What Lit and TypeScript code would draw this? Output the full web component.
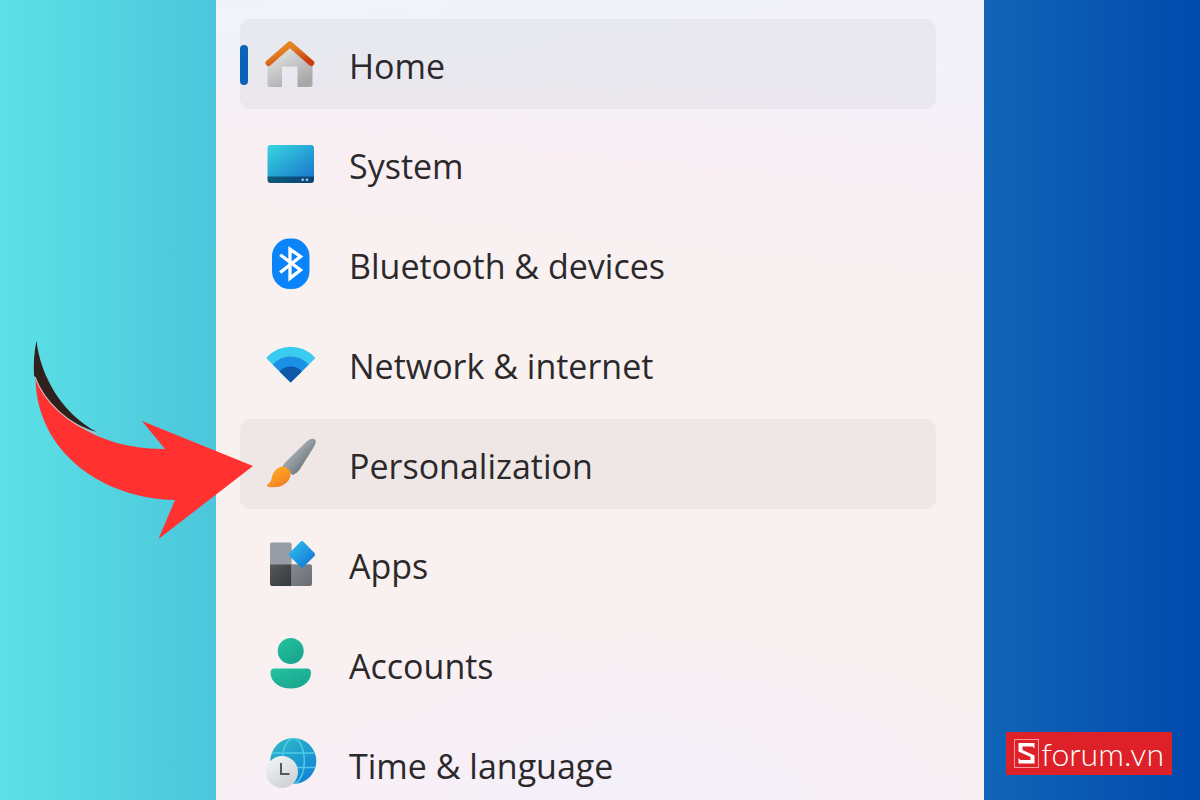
import { LitElement, html, svg, css, nothing } from "lit";
import { customElement, property } from "lit/decorators.js";

const icons: Record<string, unknown> = {
  home: svg`
    <defs>
      <linearGradient id="wall" x1="0" y1="0" x2="0.600" y2="1"><stop offset="0.2" stop-color="#e4e4e5"/><stop offset="1" stop-color="#a9a8a9"/></linearGradient>
      <linearGradient id="roof" x1="0" y1="0" x2="0.8" y2="1"><stop offset="0" stop-color="#e8982a"/><stop offset="0.45" stop-color="#df7a20"/><stop offset="1" stop-color="#c93d10"/></linearGradient>
    </defs>
    <path d="M3.500 25 26 6 48.500 25V46.500Q48.500 49 46 49H33.500V28.500H18V49H6Q3.500 49 3.500 46.500Z" fill="url(#wall)"/>
    <path d="M4.500 25 25.900 6.200 47.300 25" fill="none" stroke="url(#roof)" stroke-width="6" stroke-linecap="round" stroke-linejoin="round"/>`,
  system: svg`
    <defs><linearGradient id="screen" x1="0" y1="0" x2="1" y2="1"><stop offset="0" stop-color="#38d6df"/><stop offset="1" stop-color="#1878cc"/></linearGradient>
    <linearGradient id="bar" x1="0" y1="0" x2="1" y2="0"><stop offset="0" stop-color="#0c5b78"/><stop offset="1" stop-color="#0b4478"/></linearGradient></defs>
    <path d="M3.500 39V10Q3.500 7 6.500 7H47Q50 7 50 10V39Z" fill="url(#screen)"/>
    <path d="M3.500 38.500H50V41.500Q50 45 47 45H6.500Q3.500 45 3.500 41.500Z" fill="url(#bar)"/>
    <circle cx="38.700" cy="41.800" r="1.300" fill="#a9c4dc"/><circle cx="43" cy="41.800" r="1.300" fill="#a9c4dc"/>`,
  bluetooth: svg`
    <rect x="8" y="0.500" width="37.500" height="50.500" rx="17.500" ry="18" fill="#0a84f8"/>
    <path d="M16.200 16.800 36.500 32 26 40.300V11.200L36.500 18.500 16.200 34.500" fill="none" stroke="#fff" stroke-width="3.300" stroke-linejoin="miter"/>`,
  network: svg`
    <path d="M26.700 44.500 2.500 20.500Q2.200 19.500 3 19Q13 8.700 26.700 8.700T50.500 19Q51.200 19.500 51 20.500Z" fill="#3ccbf0"/>
    <path d="M26.700 44.500 8.700 26.600Q16.200 18.600 26.700 18.600T44.700 26.600Z" fill="#1c90e4"/>
    <path d="M26.700 44.500 15.500 33.400Q20 28.600 26.700 28.600T37.900 33.400Z" fill="#0d58a8"/>`,
  brush: svg`
    <defs><linearGradient id="handle" x1="0.300" y1="0.300" x2="0.700" y2="0.700"><stop offset="0" stop-color="#a9b1b9"/><stop offset="1" stop-color="#737b83"/></linearGradient>
    <linearGradient id="hair" x1="0.200" y1="0.200" x2="0.700" y2="1"><stop offset="0" stop-color="#ffa426"/><stop offset="0.5" stop-color="#fb9322"/><stop offset="1" stop-color="#ec7a2c"/></linearGradient></defs>
    <path d="M43 3.200Q48 -0.500 51 1.500Q53 4 49.500 9.500L36 31Q33 35.500 28.500 37L18.500 29Q18.500 27.500 21 24.500Z" fill="url(#handle)"/>
    <path d="M17.500 28.500Q21 28 24.500 31Q27 33.500 26.500 37Q26 42 21.500 45.500Q15 50.500 5 49Q2 48.500 3.500 46.500Q7.500 44 8 38.500Q10.500 30.500 17.500 28.500Z" fill="url(#hair)"/>`,
  apps: svg`
    <defs><linearGradient id="tile" x1="0" y1="0" x2="1" y2="1"><stop offset="0" stop-color="#2fc3f0"/><stop offset="1" stop-color="#1070d0"/></linearGradient>
    <linearGradient id="dark" x1="0" y1="0" x2="1" y2="1"><stop offset="0" stop-color="#56595c"/><stop offset="1" stop-color="#34393d"/></linearGradient>
    <linearGradient id="mid" x1="0" y1="0" x2="1" y2="1"><stop offset="0" stop-color="#858a90"/><stop offset="1" stop-color="#666c72"/></linearGradient></defs>
    <path d="M6 26.300V6.500Q6 4.500 8 4.500H25.700Q27.700 4.500 27.700 6.500V26.300Z" fill="#969da5"/>
    <path d="M6 26.300H27.700V48H8Q6 48 6 46Z" fill="url(#dark)"/>
    <path d="M27.700 26.300H46Q48 26.300 48 28.300V46Q48 48 46 48H27.700Z" fill="url(#mid)"/>
    <path d="M36.500 3.700Q38 2.400 39.500 3.700L50.500 15Q51.800 16.500 50.500 18L39.500 29Q38 30.400 36.500 29L25.500 18Q24.200 16.500 25.500 15Z" fill="url(#tile)"/>`,
  accounts: svg`
    <defs><linearGradient id="body" x1="0" y1="0" x2="0.700" y2="1"><stop offset="0" stop-color="#25c3a2"/><stop offset="1" stop-color="#19a48d"/></linearGradient></defs>
    <circle cx="26.700" cy="13" r="13" fill="url(#body)"/>
    <path d="M10.500 30.500H43Q47 30.500 47 34.500Q47 42 40.500 46.500Q35 50.500 26.700 50.500T13 46.500Q6.500 42 6.500 34.500Q6.500 30.500 10.500 30.500Z" fill="url(#body)"/>`,
  time: svg`
    <defs><linearGradient id="globe" x1="0.200" y1="0" x2="0.800" y2="1"><stop offset="0" stop-color="#2cb8c6"/><stop offset="1" stop-color="#1180d8"/></linearGradient>
    <linearGradient id="face" x1="0" y1="0" x2="0.600" y2="1"><stop offset="0" stop-color="#f6f7f8"/><stop offset="1" stop-color="#cfd2d6"/></linearGradient></defs>
    <circle cx="29.300" cy="23" r="23" fill="url(#globe)"/>
    <g fill="none" stroke="#4fcbe8" stroke-width="1.500"><path d="M8 15H50.500M8 29.500H51"/><ellipse cx="29.300" cy="23" rx="11" ry="22.500"/></g>
    <circle cx="18" cy="34" r="16" fill="url(#face)"/>
    <path d="M17 25V36H25.500" fill="none" stroke="#55575b" stroke-width="2"/>`,
};

interface Entry { label: string; icon: string; state?: "current" | "hover"; }

const entries: Entry[] = [
  { label: "Home", icon: "home", state: "current" },
  { label: "System", icon: "system" },
  { label: "Bluetooth & devices", icon: "bluetooth" },
  { label: "Network & internet", icon: "network" },
  { label: "Personalization", icon: "brush", state: "hover" },
  { label: "Apps", icon: "apps" },
  { label: "Accounts", icon: "accounts" },
  { label: "Time & language", icon: "time" },
];

@customElement("nav-entry")
export class NavEntry extends LitElement {
  @property({ attribute: false }) entry!: Entry;

  static styles = css`
    :host { display: block; position: relative; }
    .link {
      display: flex; align-items: center; gap: 33px;
      height: 90px; box-sizing: border-box; padding-left: 24px;
      border-radius: 10px; color: #2b292b; text-decoration: none;
      font: 34px/48px "Open Sans", "Noto Sans", sans-serif;
    }
    .label { padding-top: 4px; }
    .current, .hover { background: rgba(60, 50, 55, 0.05); }
    .icon { width: 52px; height: 52px; flex: none; overflow: visible; }
    .marker {
      position: absolute; left: 0; top: 26px; width: 8px; height: 40px;
      border-radius: 4px; background: #0a63b8;
    }
    .arrow {
      position: absolute; left: -210px; top: -83px;
      width: 228px; height: 208px; pointer-events: none;
    }
  `;

  render() {
    const { label, icon, state } = this.entry;
    return html`
      <a class="link ${state ?? ""}" href="#${icon}" aria-current=${state === "current" ? "page" : nothing}>
        <svg class="icon" viewBox="0 0 52 52" aria-hidden="true">${icons[icon]}</svg>
        <span class="label">${label}</span>
      </a>
      ${state === "current" ? html`<span class="marker"></span>` : nothing}
      ${state === "hover" ? html`
        <svg class="arrow" viewBox="30 336 228 208" aria-hidden="true">
          <path d="M36.500 340.500C40 375 62 414 97 432C66 423 43 401 34 375Q33 357 36.500 340.500Z" fill="#30211f"/>
          <path d="M35.500 379C50 412 96 450 165 449L142 421 253 466 158.500 539 175 500C104 499 37 453 35.500 379Z" fill="#ff3131"/>
          <path d="M35 377C44 402 68 424 97 434" fill="none" stroke="#c9b7b8" stroke-width="1.200"/>
        </svg>` : nothing}
    `;
  }
}

@customElement("app-root")
export class AppRoot extends LitElement {
  static styles = css`
    :host {
      display: block; position: relative; height: 100vh; overflow: hidden;
      background: linear-gradient(90deg, #5ce1e6, #004aad);
    }
    .panel {
      width: 64%; min-height: 100%; margin: 0 auto; box-sizing: border-box;
      padding: 19px 48px 0 24px;
      background:
        radial-gradient(ellipse 55% 26% at 55% 100%, #f3f0fa, rgba(246, 239, 248, 0.7) 50%, rgba(249, 240, 245, 0)),
        radial-gradient(ellipse 90% 18% at 0% 0%, #f0f4fa, rgba(243, 241, 248, 0)),
        linear-gradient(186deg, #f2f2fb, #f4f1f9 12%, #f9eff4 22%, #f9f0f1 34%, #f9f1ef 42%, #f9f1ef 74%, #f9eff2 88%, #f8f0f5);
    }
    .list { display: flex; flex-direction: column; gap: 10px; margin: 0; padding: 0; list-style: none; }
    .brand {
      position: absolute; right: 28px; bottom: 25px;
      display: flex; align-items: center; gap: 2px;
      height: 43px; padding: 0 8px; box-sizing: border-box;
      background: #de2129; color: #fff; text-decoration: none;
      font: 300 32px/40px Lato, sans-serif;
    }
    .mark { width: 25px; height: 29px; }
  `;

  render() {
    return html`
      <nav class="panel" aria-label="Settings">
        <ul class="list">
          ${entries.map((entry) => html`<li><nav-entry .entry=${entry}></nav-entry></li>`)}
        </ul>
      </nav>
      <a class="brand" href="#sforum" aria-label="Sforum.vn">
        <svg class="mark" viewBox="0 0 25 29" aria-hidden="true">
          <rect x="0.500" y="0.500" width="24" height="28" fill="none" stroke="#f59a9e"/>
          <path d="M4.500 4H20.500V9.500L18.500 7.500H8.500V11L20.500 16.500V24.500H4.500V19L6.500 21H16.500V18L4.500 12.500Z" fill="#fff"/>
        </svg>
        <span>forum.vn</span>
      </a>
    `;
  }
}
